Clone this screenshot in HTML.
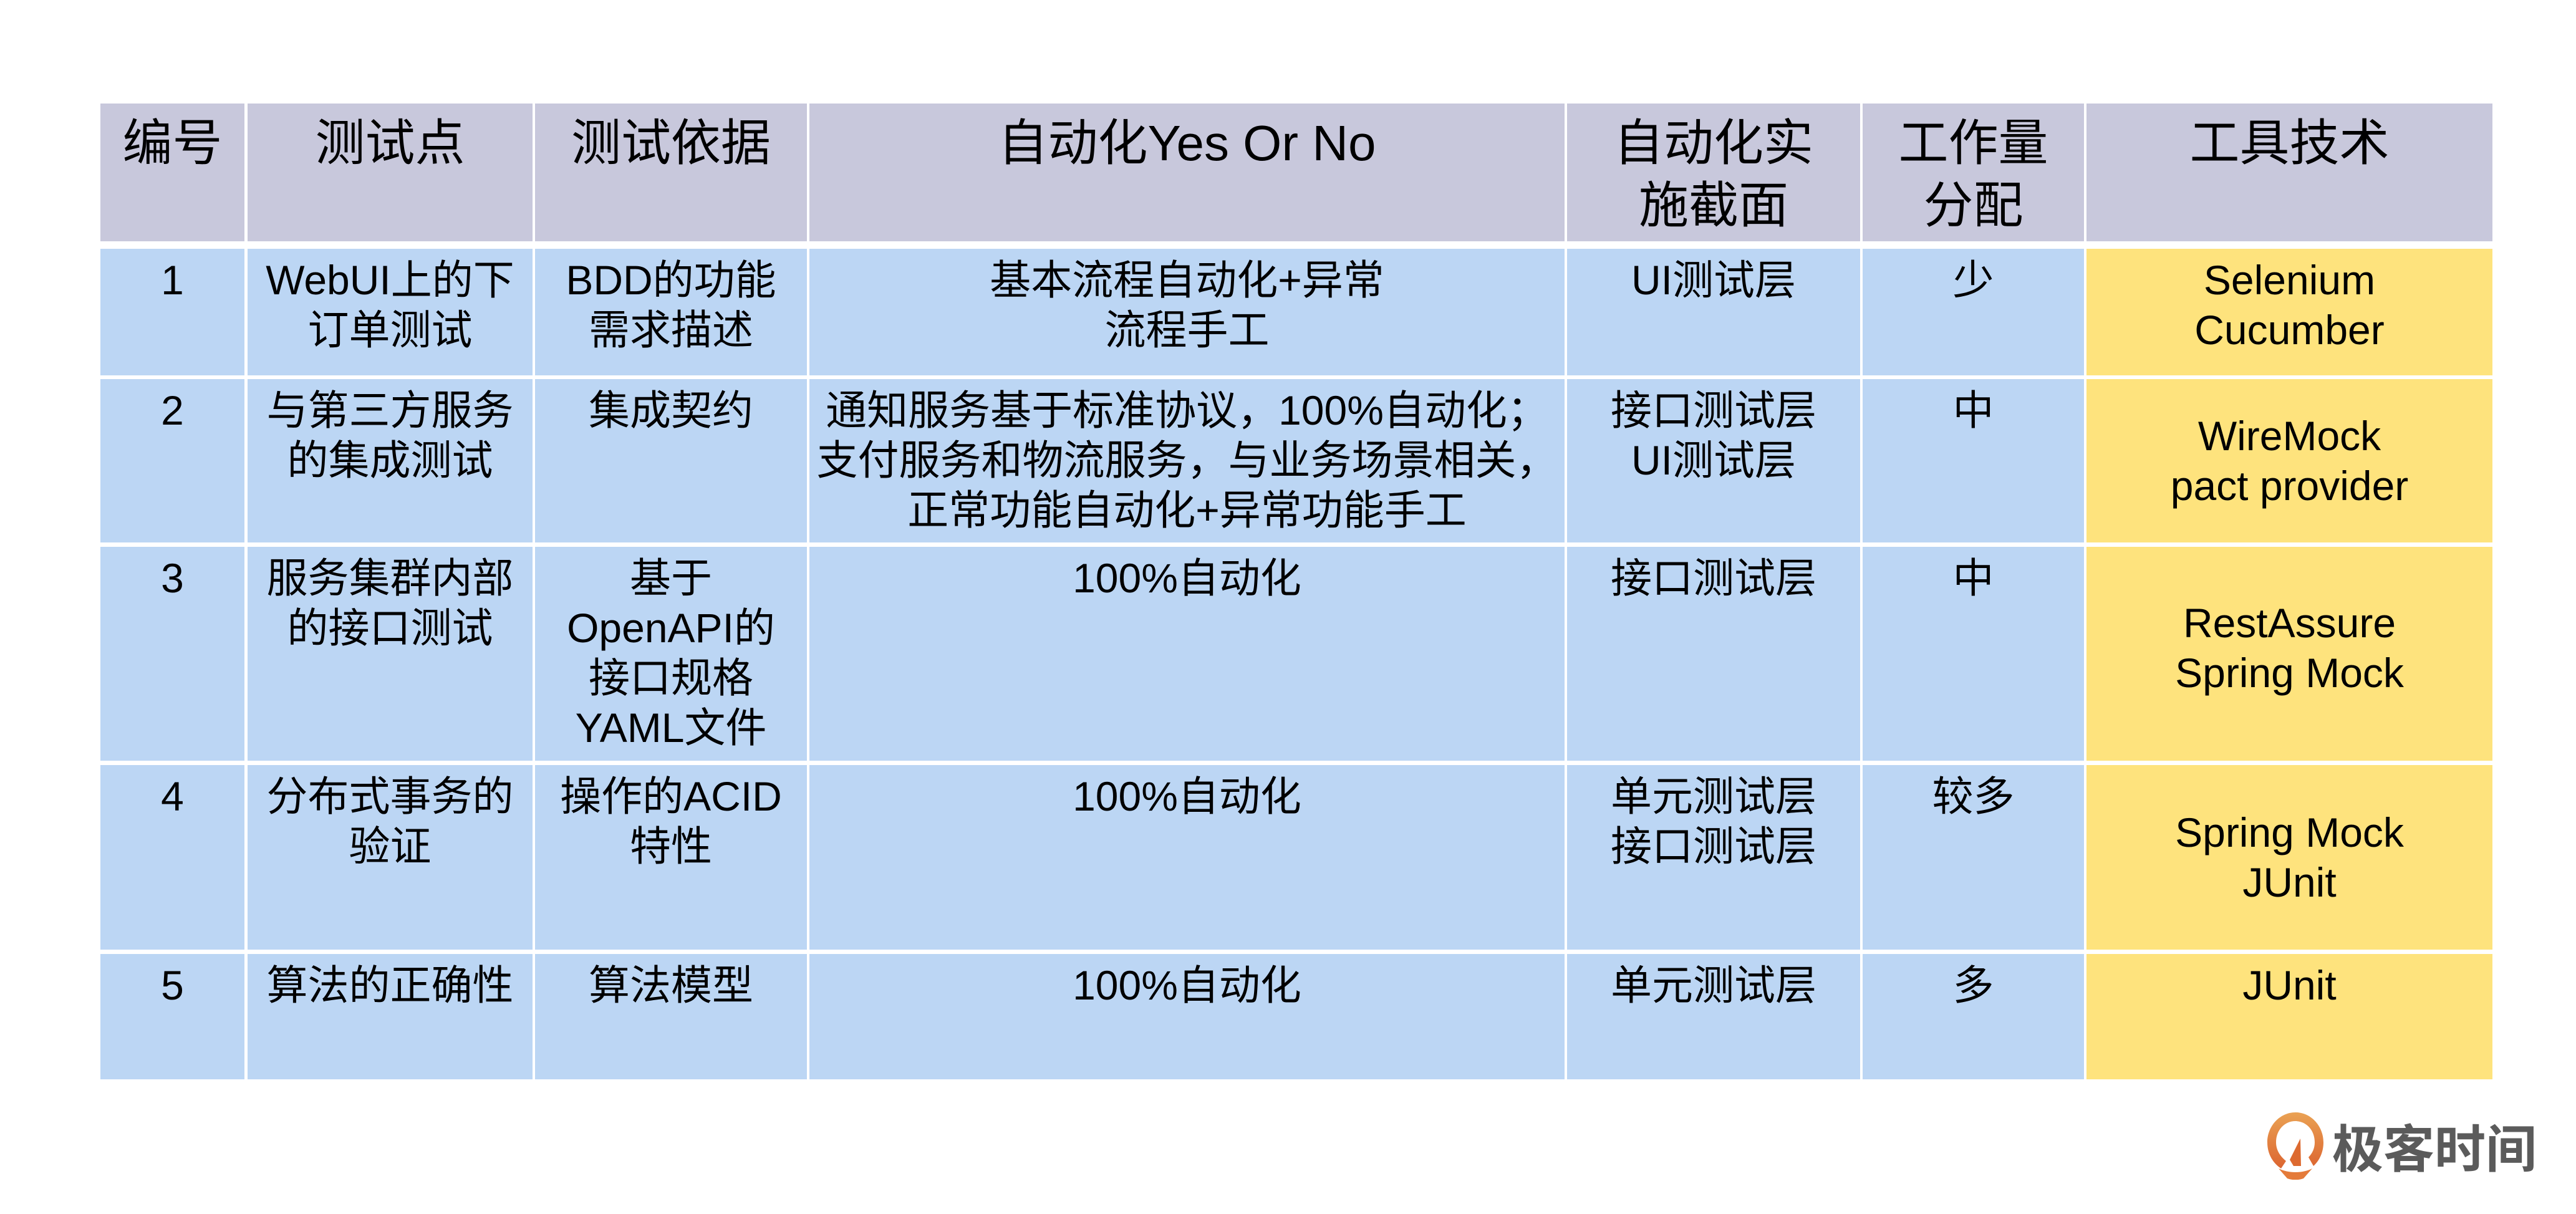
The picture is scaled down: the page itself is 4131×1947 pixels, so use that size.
<!DOCTYPE html>
<html><head><meta charset="utf-8"><style>
html,body{margin:0;padding:0;background:#fff;}
body{width:4131px;height:1947px;position:relative;overflow:hidden;font-family:"Liberation Sans","Noto Sans CJK SC",sans-serif;color:#000;}
.c{position:absolute;box-sizing:border-box;text-align:center;font-size:66px;line-height:80px;padding-top:10px;background:#bcd6f4;white-space:nowrap;}
.h{background:#c8c8dc;font-size:80px;line-height:100px;padding-top:14px;}
.y{background:#fee37d;display:flex;align-items:center;justify-content:center;padding-top:0;}
.y.t{align-items:flex-start;padding-top:10px;}
</style></head><body>
<div class="c h" style="left:161px;top:166px;width:231px;height:221px">编号</div>
<div class="c h" style="left:397px;top:166px;width:457px;height:221px">测试点</div>
<div class="c h" style="left:858px;top:166px;width:436px;height:221px">测试依据</div>
<div class="c h" style="left:1298px;top:166px;width:1211px;height:221px">自动化Yes Or No</div>
<div class="c h" style="left:2513px;top:166px;width:470px;height:221px">自动化实<br>施截面</div>
<div class="c h" style="left:2987px;top:166px;width:355px;height:221px">工作量<br>分配</div>
<div class="c h" style="left:3346px;top:166px;width:651px;height:221px">工具技术</div>
<div class="c" style="left:161px;top:399px;width:231px;height:203px">1</div>
<div class="c" style="left:397px;top:399px;width:457px;height:203px">WebUI上的下<br>订单测试</div>
<div class="c" style="left:858px;top:399px;width:436px;height:203px">BDD的功能<br>需求描述</div>
<div class="c" style="left:1298px;top:399px;width:1211px;height:203px">基本流程自动化+异常<br>流程手工</div>
<div class="c" style="left:2513px;top:399px;width:470px;height:203px">UI测试层</div>
<div class="c" style="left:2987px;top:399px;width:355px;height:203px">少</div>
<div class="c y t" style="left:3346px;top:399px;width:651px;height:203px">Selenium<br>Cucumber</div>
<div class="c" style="left:161px;top:608px;width:231px;height:262px">2</div>
<div class="c" style="left:397px;top:608px;width:457px;height:262px">与第三方服务<br>的集成测试</div>
<div class="c" style="left:858px;top:608px;width:436px;height:262px">集成契约</div>
<div class="c" style="left:1298px;top:608px;width:1211px;height:262px">通知服务基于标准协议，100%自动化；<br>支付服务和物流服务，与业务场景相关，<br>正常功能自动化+异常功能手工</div>
<div class="c" style="left:2513px;top:608px;width:470px;height:262px">接口测试层<br>UI测试层</div>
<div class="c" style="left:2987px;top:608px;width:355px;height:262px">中</div>
<div class="c y" style="left:3346px;top:608px;width:651px;height:262px"><div>WireMock<br>pact provider</div></div>
<div class="c" style="left:161px;top:877px;width:231px;height:343px">3</div>
<div class="c" style="left:397px;top:877px;width:457px;height:343px">服务集群内部<br>的接口测试</div>
<div class="c" style="left:858px;top:877px;width:436px;height:343px">基于<br>OpenAPI的<br>接口规格<br>YAML文件</div>
<div class="c" style="left:1298px;top:877px;width:1211px;height:343px">100%自动化</div>
<div class="c" style="left:2513px;top:877px;width:470px;height:343px">接口测试层</div>
<div class="c" style="left:2987px;top:877px;width:355px;height:343px">中</div>
<div class="c y" style="left:3346px;top:877px;width:651px;height:343px"><div style="margin-top:-20px">RestAssure<br>Spring Mock</div></div>
<div class="c" style="left:161px;top:1227px;width:231px;height:296px">4</div>
<div class="c" style="left:397px;top:1227px;width:457px;height:296px">分布式事务的<br>验证</div>
<div class="c" style="left:858px;top:1227px;width:436px;height:296px">操作的ACID<br>特性</div>
<div class="c" style="left:1298px;top:1227px;width:1211px;height:296px">100%自动化</div>
<div class="c" style="left:2513px;top:1227px;width:470px;height:296px">单元测试层<br>接口测试层</div>
<div class="c" style="left:2987px;top:1227px;width:355px;height:296px">较多</div>
<div class="c y" style="left:3346px;top:1227px;width:651px;height:296px"><div>Spring Mock<br>JUnit</div></div>
<div class="c" style="left:161px;top:1530px;width:231px;height:201px">5</div>
<div class="c" style="left:397px;top:1530px;width:457px;height:201px">算法的正确性</div>
<div class="c" style="left:858px;top:1530px;width:436px;height:201px">算法模型</div>
<div class="c" style="left:1298px;top:1530px;width:1211px;height:201px">100%自动化</div>
<div class="c" style="left:2513px;top:1530px;width:470px;height:201px">单元测试层</div>
<div class="c" style="left:2987px;top:1530px;width:355px;height:201px">多</div>
<div class="c y t" style="left:3346px;top:1530px;width:651px;height:201px">JUnit</div>
<svg style="position:absolute;left:3634px;top:1782px" width="94" height="110" viewBox="0 0 94 110">
<defs><linearGradient id="g" x1="0" y1="0" x2="0" y2="1"><stop offset="0" stop-color="#eaa254"/><stop offset="1" stop-color="#dc6530"/></linearGradient></defs>
<path d="M47 2C22 2 2 24 2 50c0 20 10 34 22 42l8-12C22 72 16 62 16 50c0-20 14-34 31-34s31 14 31 34c0 10-4 18-10 24l8 14C87 78 92 64 92 50 92 24 72 2 47 2z" fill="url(#g)"/>
<path d="M55 44L38 78l6 10h12z" fill="#dd6a30"/>
<path d="M20 92c16 8 38 8 54 0l-14 16c-8 3-18 3-26 0z" fill="#e47b3a"/>
</svg>
<div style="position:absolute;left:3740px;top:1787px;font-size:82px;line-height:100px;color:#5b5b5b;font-weight:bold;font-family:'Noto Sans CJK SC',sans-serif;">极客时间</div>
</body></html>
